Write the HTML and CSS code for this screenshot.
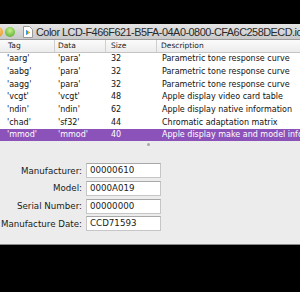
FILE: index.html
```html
<!DOCTYPE html>
<html lang="en">
<head>
    <meta charset="UTF-8">
    <title>Color LCD profile</title>
    <link rel="stylesheet" href="styles.css">
</head>
<body>
    <div class="screen">
        <div class="window">
            <div class="titlebar">
                <span class="light orange"></span>
                <span class="light green"></span>
                <svg class="docicon" width="10" height="12" viewBox="0 0 10 12">
                    <path d="M0.5 0.5h6l3 3v8h-9z" fill="#fff" stroke="#999" stroke-width="1"/>
                    <path d="M3 4l4 2.5-4 2.5z" fill="#e0307a"/>
                    <path d="M3 4l2 1.25v2.5l-2 1.25z" fill="#2aa0e8"/>
                    <path d="M5 5.25l2 1.25-2 1.25z" fill="#f2c400"/>
                </svg>
                <span class="title">Color LCD-F466F621-B5FA-04A0-0800-CFA6C258DECD.icc</span>
            </div>
            <div class="table">
                <div class="row head">
                    <span class="c tag">Tag</span>
                    <span class="c data">Data</span>
                    <span class="c size">Size</span>
                    <span class="c desc">Description</span>
                </div>
                <div class="row">
                    <span class="c tag">'aarg'</span><span class="c data">'para'</span><span class="c size">32</span><span class="c desc">Parametric tone response curve</span>
                </div>
                <div class="row">
                    <span class="c tag">'aabg'</span><span class="c data">'para'</span><span class="c size">32</span><span class="c desc">Parametric tone response curve</span>
                </div>
                <div class="row">
                    <span class="c tag">'aagg'</span><span class="c data">'para'</span><span class="c size">32</span><span class="c desc">Parametric tone response curve</span>
                </div>
                <div class="row">
                    <span class="c tag">'vcgt'</span><span class="c data">'vcgt'</span><span class="c size">48</span><span class="c desc">Apple display video card table</span>
                </div>
                <div class="row">
                    <span class="c tag">'ndin'</span><span class="c data">'ndin'</span><span class="c size">62</span><span class="c desc">Apple display native information</span>
                </div>
                <div class="row">
                    <span class="c tag">'chad'</span><span class="c data">'sf32'</span><span class="c size">44</span><span class="c desc">Chromatic adaptation matrix</span>
                </div>
                <div class="row selected">
                    <span class="c tag">'mmod'</span><span class="c data">'mmod'</span><span class="c size">40</span><span class="c desc">Apple display make and model information</span>
                </div>
            </div>
            <div class="pane">
                <div class="grip"></div>
                <div class="form">
                    <label>Manufacturer:</label><div class="field">00000610</div>
                    <label>Model:</label><div class="field">0000A019</div>
                    <label>Serial Number:</label><div class="field">00000000</div>
                    <label>Manufacture Date:</label><div class="field">CCD71593</div>
                </div>
            </div>
        </div>
        <div class="desk"></div>
    </div>
</body>
</html>
```

FILE: styles.css
```css
body{
    margin: 0;
    background: #fff;
    font-family: "DejaVu Sans", sans-serif;
    overflow: hidden;
}
.screen{
    width: 300px;
    height: 292px;
    background: #000;
    padding-top: 24px;
    box-sizing: border-box;
    overflow: hidden;
}
.window{
    height: 221px;
    background: #ececec;
    border-bottom: 1px solid #8a8a8a;
    box-sizing: border-box;
    overflow: hidden;
}
.titlebar{
    height: 16px;
    background: linear-gradient(#e4e4e4, #c9c9c9);
    border-bottom: 1px solid #9c9c9c;
    box-sizing: border-box;
    display: flex;
    align-items: center;
    white-space: nowrap;
    margin-left: -7px;
}
.light{
    width: 10px;
    height: 10px;
    border-radius: 50%;
    margin-right: 2px;
    flex: none;
}
.orange{
    background: radial-gradient(circle at 50% 35%, #ffd480, #e08a10);
}
.green{
    background: radial-gradient(circle at 50% 35%, #c6f08a, #4aa324);
}
.docicon{
    margin-left: 6px;
    margin-right: 3px;
    flex: none;
}
.title{
    font-family: "Liberation Sans", Arial, sans-serif;
    font-size: 10.9px;
    letter-spacing: -0.5px;
    color: #2a2a2a;
}
.table{
    background: #fff;
    font-size: 8px;
    color: #111;
}
.row{
    height: 12.67px;
    display: flex;
    align-items: center;
    white-space: nowrap;
}
.row.head{
    background: linear-gradient(#fbfbfb, #ececec);
    border-bottom: 1px solid #c4c4c4;
    box-sizing: border-box;
    font-size: 7.5px;
    color: #222;
}
.c{
    flex: none;
    box-sizing: border-box;
    padding-left: 7px;
}
.tag{ width: 55px; }
.data{ width: 51px; padding-left: 3px; }
.size{ width: 51px; padding-left: 5px; }
.desc{ padding-left: 5px; }
.head .c{
    height: 100%;
    display: flex;
    align-items: center;
    border-right: 1px solid #cfcfcf;
}
.head .tag{ padding-left: 8px; }
.head .desc{ border-right: none; padding-left: 4px; }
.selected{
    background: #8b52b9;
    color: #fff;
}
.pane{
    height: 103px;
    padding-top: 22px;
    box-sizing: border-box;
    position: relative;
}
.grip{
    position: absolute;
    left: 147px;
    top: 2px;
    width: 3px;
    height: 3px;
    border-radius: 50%;
    background: #a8a8a8;
}
.form{
    display: grid;
    grid-template-columns: 82px 75px;
    column-gap: 4px;
    row-gap: 2.7px;
    align-items: center;
    font-size: 8.7px;
    color: #1a1a1a;
}
.form label{
    text-align: right;
    white-space: nowrap;
}
.field{
    height: 15px;
    background: #fff;
    border: 1px solid #c6c6c6;
    border-top-color: #a8a8a8;
    box-sizing: border-box;
    padding-left: 3px;
    line-height: 13px;
}
.desk{
    height: 47px;
}
```
